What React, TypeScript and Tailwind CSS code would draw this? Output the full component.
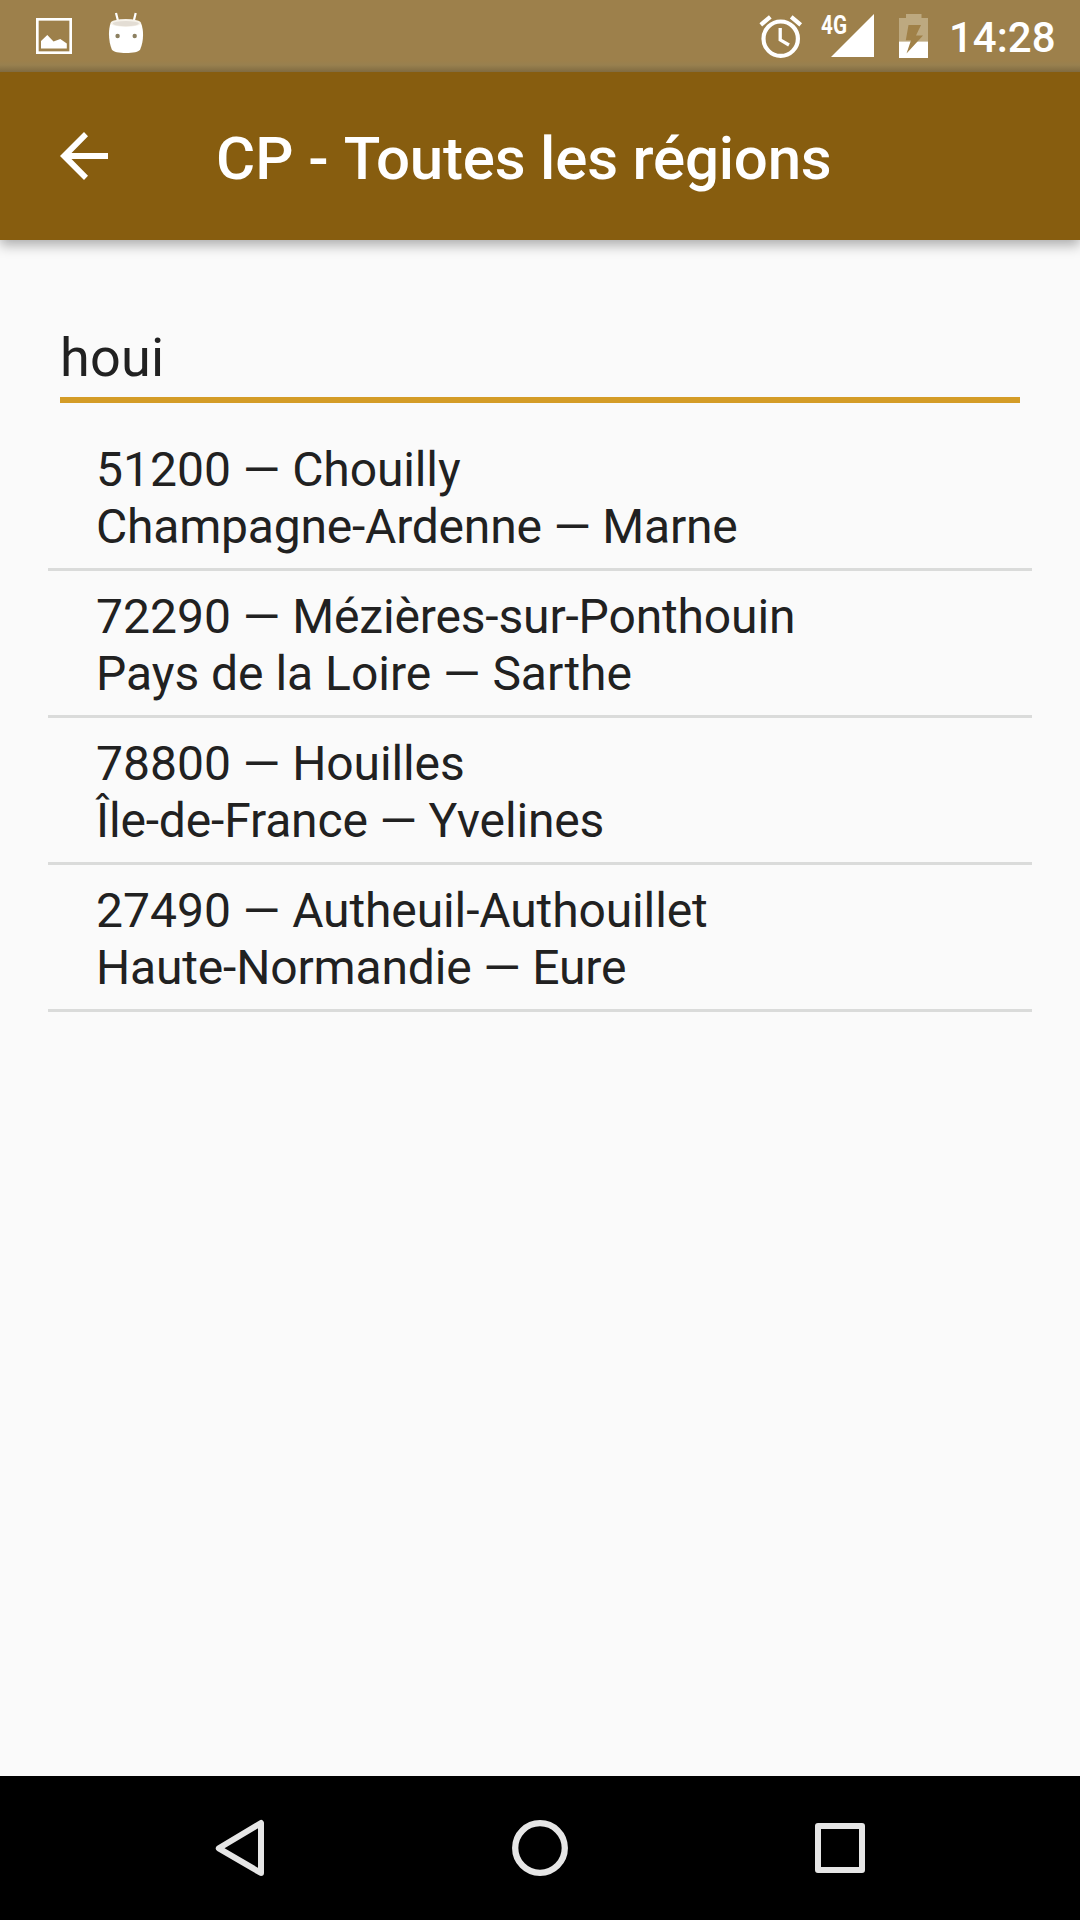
import React from 'react';

type Place = {
  code: string;
  city: string;
  region: string;
  dept: string;
  cityTracking: string;
  areaTracking: string;
};

const places: Place[] = [
  { code: '51200', city: 'Chouilly', region: 'Champagne-Ardenne', dept: 'Marne', cityTracking: 'tracking-[-0.12px]', areaTracking: 'tracking-[-0.21px]' },
  { code: '72290', city: 'Mézières-sur-Ponthouin', region: 'Pays de la Loire', dept: 'Sarthe', cityTracking: 'tracking-[-0.15px]', areaTracking: 'tracking-[-0.02px]' },
  { code: '78800', city: 'Houilles', region: 'Île-de-France', dept: 'Yvelines', cityTracking: 'tracking-[-0.12px]', areaTracking: 'tracking-[-0.15px]' },
  { code: '27490', city: 'Autheuil-Authouillet', region: 'Haute-Normandie', dept: 'Eure', cityTracking: 'tracking-[-0.12px]', areaTracking: 'tracking-[-0.17px]' },
];

function StatusBar() {
  return (
    <header className="flex h-[72px] shrink-0 items-start bg-[linear-gradient(to_bottom,#9d804b_0,#9d804b_60px,#98804f_65px,#806b41_72px)] pl-9 text-white">
      <svg className="mt-[18px] h-9 w-9" viewBox="36 18 36 36" aria-label="Image">
        <rect x="37.3" y="19.3" width="33.4" height="33.4" fill="none" stroke="#fff" strokeWidth="2.7" />
        <path d="M41 48.5V41L47.3 35L53.5 41.5L60.3 39L66.8 43.5V48.5Z" fill="#fff" />
      </svg>
      <svg className="ml-9 mt-3 h-[42px] w-9" viewBox="108 12 36 42" aria-label="Android">
        <path d="M116 13L118.3 22M135.7 13L133.5 22" stroke="#fff" strokeWidth="2.2" />
        <path d="M110.7 23C107.8 31 108.8 42 111.8 49.5C114 54.2 138 54.2 140.2 49.5C143.5 42 144.2 31 141 23Z" fill="#fff" />
        <ellipse cx="125.8" cy="23" rx="15.2" ry="3.9" fill="#f6f2ea" />
        <ellipse cx="125.8" cy="23.6" rx="13" ry="2.6" fill="#e3ddd4" />
        <circle cx="117.6" cy="36" r="2.2" fill="#8c8061" />
        <circle cx="134.7" cy="36" r="2.2" fill="#8c8061" />
      </svg>
      <svg className="ml-[615px] mt-3.5 h-11 w-11" viewBox="759 14 44 44" fill="none" stroke="#fff" aria-label="Alarme">
        <circle cx="780.7" cy="38.7" r="17.2" strokeWidth="4.2" />
        <path d="M760.8 24.8L770.3 16.8M800.7 24.8L791.2 16.8" strokeWidth="4.2" />
        <path d="M780.2 28V39.8L789 45" strokeWidth="3.3" />
      </svg>
      <svg className="ml-[17px] mt-1.5 h-[52px] w-[55px]" viewBox="820 6 55 52" aria-label="Signal">
        <path d="M874 14V57H831Z" fill="#fff" />
        <text x="821" y="33.6" textLength="26" lengthAdjust="spacingAndGlyphs" className="fill-white font-['Roboto'] text-[25px] font-bold">4G</text>
      </svg>
      <svg className="ml-6 mt-3.5 h-11 w-[29px]" viewBox="899 14 29 44" aria-label="Batterie">
        <path d="M906 14H921.5V18H928V41.5H899V18H906Z" fill="#bda980" />
        <path d="M899 41.5H928V58H899Z" fill="#fff" />
        <path d="M908.5 25H921L916 35.5H923L906.5 53.5L911 40.3H905.8Z" fill="#a08148" />
      </svg>
      <time className="ml-[21px] mt-[13px] text-[42px] font-medium leading-[50px]">14:28</time>
    </header>
  );
}

function AppBar() {
  return (
    <div className="relative z-10 flex h-[168px] shrink-0 items-center bg-[#875d0f] pl-[60px] text-white shadow-[0_5px_12px_rgba(0,0,0,0.32)] [clip-path:inset(0_0_-40px_0)]">
      <button className="h-12 w-12" aria-label="Retour">
        <svg className="h-12 w-12" viewBox="60 132 48 48">
          <path d="M108 153V159H71.5L88 175.7L84 179.9L60 156L84 132.1L88 136.3L71.5 153Z" fill="#fff" />
        </svg>
      </button>
      <h1 className="ml-[108px] mt-1.5 text-[60px] font-medium leading-[70px]">
        CP - <span className="tracking-[-0.2px]">Toutes les régions</span>
      </h1>
    </div>
  );
}

function NavBar() {
  return (
    <nav className="flex h-36 shrink-0 items-center bg-black pl-[214px]">
      <svg className="h-[60px] w-[52px]" viewBox="214 1818 52 60" fill="none" stroke="#e6e6e6" strokeWidth="6" strokeLinejoin="round">
        <path d="M218.8 1848.3L261 1823V1873Z" />
      </svg>
      <svg className="ml-[244px] h-[60px] w-[60px]" viewBox="510 1818 60 60" fill="none" stroke="#e6e6e6" strokeWidth="6.3">
        <circle cx="540" cy="1848" r="24.8" />
      </svg>
      <svg className="ml-[243px] h-[60px] w-[54px]" viewBox="813 1818 54 60" fill="none" stroke="#e6e6e6" strokeWidth="6" strokeLinejoin="round">
        <rect x="818" y="1826" width="44" height="44" />
      </svg>
    </nav>
  );
}

export default function App() {
  return (
    <div className="flex h-[1920px] w-[1080px] flex-col overflow-hidden bg-[#fafafa] font-['Roboto',sans-serif] text-[#212121]">
      <StatusBar />
      <AppBar />
      <main className="flex-1 px-12 pt-[86px]">
        <div className="mx-3 h-[77px] border-b-[6px] border-[#d49c27] text-[54px] leading-[64px] tracking-[0.2px]">houi</div>
        <ul className="pt-[21px]">
          {places.map((p) => (
            <li key={p.code} className="h-[147px] border-b-[3px] border-[#dadbda] pl-12 pt-[17px] text-[48px] leading-[57px]">
              <p>{p.code} — <span className={p.cityTracking}>{p.city}</span></p>
              <p className={p.areaTracking}>{p.region} — {p.dept}</p>
            </li>
          ))}
        </ul>
      </main>
      <NavBar />
    </div>
  );
}
